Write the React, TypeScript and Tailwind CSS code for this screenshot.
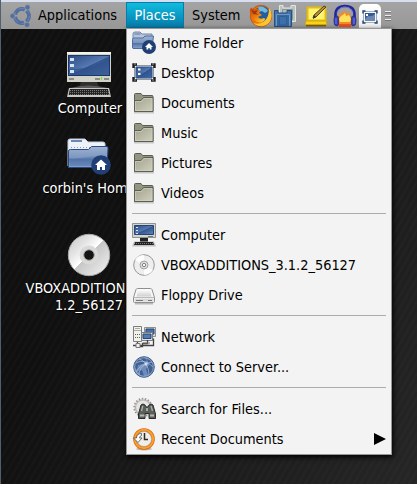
import React from "react";

type IconProps = { className?: string };

const Gradients = () => (
  <svg className="absolute h-0 w-0" aria-hidden="true">
    <defs>
      <linearGradient id="blue" x1="0" y1="0" x2="1" y2="1">
        <stop offset="0" stopColor="#2d4c85" />
        <stop offset=".5" stopColor="#5579b1" />
        <stop offset=".52" stopColor="#34558f" />
        <stop offset="1" stopColor="#6284b6" />
      </linearGradient>
      <linearGradient id="folderBlue" x1="0" y1="0" x2="0" y2="1">
        <stop offset="0" stopColor="#9fb3d1" />
        <stop offset=".55" stopColor="#7b95bf" />
        <stop offset=".6" stopColor="#5474a8" />
        <stop offset="1" stopColor="#89a2c8" />
      </linearGradient>
      <linearGradient id="olive" x1="0" y1="0" x2="1" y2="1">
        <stop offset="0" stopColor="#a1a18d" />
        <stop offset="1" stopColor="#d0d0bc" />
      </linearGradient>
      <linearGradient id="disc" x1="0" y1="0" x2="1" y2="1">
        <stop offset="0" stopColor="#c5c5c5" />
        <stop offset=".3" stopColor="#e4e4e4" />
        <stop offset=".49" stopColor="#ffffff" />
        <stop offset=".5" stopColor="#c6c6c6" />
        <stop offset=".75" stopColor="#dedede" />
        <stop offset="1" stopColor="#f4f4f4" />
      </linearGradient>
      <linearGradient id="fox" x1="0" y1="0" x2="1" y2="1">
        <stop offset="0" stopColor="#cf3c08" />
        <stop offset=".5" stopColor="#ee7d0a" />
        <stop offset="1" stopColor="#ffd83a" />
      </linearGradient>
      <linearGradient id="metal" x1="0" y1="0" x2="0" y2="1">
        <stop offset="0" stopColor="#ffffff" />
        <stop offset="1" stopColor="#cfcfcf" />
      </linearGradient>
      <pattern id="keys" width="2" height="2" patternUnits="userSpaceOnUse">
        <rect width="2" height="2" fill="#242424" />
        <rect width="1" height="1" fill="#777" />
      </pattern>
    </defs>
  </svg>
);

const ComputerArt = () => (
  <>
    <path d="M15 30h16l2 5H13z" fill="#303030" />
    <path d="M4 36q18-5 38 0z" fill="#5b5b5b" />
    <path d="M3 36h40l2 9H1z" fill="#c8c8c3" />
    <path d="M4 37h38l1.500 6h-41z" fill="url(#keys)" />
    <path d="M1 0h44v30H1z" fill="#d2d3c8" />
    <path d="M1 0h44v2H1z" fill="#f3f4e9" />
    <path d="M2 3h42v21H2z" fill="#193767" />
    <path d="M3 4h40v19H3z" fill="url(#blue)" />
    <path d="M3 17Q26 18 43 6v17H3z" fill="#2d508c" opacity=".65" />
    <path d="M4 6h4v3H4zM4 12h4v3H4zM4 18h4v3H4z" fill="#d5e3f3" />
    <path d="M3 26h5v2H3zM29 26h5v2h-5zM38 26h5v2h-5z" fill="#8b8d86" />
    <path d="M35 25h1v3h-1z" fill="#72ea12" />
  </>
);

const Computer = ({ className = "h-[46px] w-[46px]" }: IconProps) => (
  <svg className={className} viewBox="0 0 46 46"><ComputerArt /></svg>
);

const HomeFolder = ({ className = "h-[37px] w-[44px]" }: IconProps) => (
  <svg className={className} viewBox="0 0 44 37">
    <path d="M1 28V3q0-2 2-2h15l3 3h15q2 0 2 2v23z" fill="#eef2f8" stroke="#c5cddb" />
    <path d="M4 2h11v2H4z" fill="#6b88b5" />
    <path d="M4 9.500h32" stroke="#8299bd" strokeDasharray="1 2" />
    <path d="M1.500 29.500V13q0-1.500 2-1.500h18l3-3h15q2 0 1.500 2l-1 17q0 2-2 2z" fill="url(#folderBlue)" stroke="#284b85" />
    <path d="M3 22Q20 18 39 18v10H3z" fill="#4c70a9" opacity=".45" />
    <circle cx="34" cy="27" r="9.800" fill="#203f75" />
    <path d="m34 21.500-6 5.500h2v5h3v-3h2v3h3v-5h2z" fill="white" />
  </svg>
);

const Disc = () => (
  <svg className="h-[44px] w-[44px]" viewBox="0 0 44 44">
    <circle cx="22" cy="22" r="20.700" fill="url(#disc)" stroke="#a9a9a9" />
    <circle cx="22" cy="22" r="9.500" fill="#d9d9d7" />
    <circle cx="22" cy="22" r="5.300" fill="#151515" stroke="#aaa" />
  </svg>
);

const SmallHome = () => (
  <svg className="size-6" viewBox="0 0 24 24">
    <path d="M1 16V3q0-2 2-2h5l2 2h10v13z" fill="#b8c5d9" stroke="#7086aa" />
    <path d="M2.500 3h6" stroke="#5878a8" />
    <path d="M.5 17V8.500Q.5 7 2 7h9l2-2h8.500L20 17.500H1z" fill="url(#folderBlue)" stroke="#4f6e9f" />
    <circle cx="17" cy="16" r="7" fill="#203f75" />
    <path d="m17 12-4 4h1.500v2.500h1.800V17h1.400v1.500h1.800V16H21z" fill="white" />
  </svg>
);

const DesktopIcon = () => (
  <svg className="size-6" viewBox="0 0 24 24">
    <path d="M2.500 4.500h19v14h-19z" fill="#e9edf1" stroke="#9199a2" />
    <path d="M4 6h16v11H4z" fill="url(#blue)" stroke="#315488" />
    <path d="M5 12Q13 13 20 7v9H5z" fill="#2b5290" opacity=".6" />
    <path d="M6 7.500h2.500v2H6zM6 12h2.500v2H6z" fill="#fff" />
    <path d="M1.500 7V3.500H5M19 3.500h3.500V7M1.500 16v3.500H5M19 19.500h3.500V16" fill="none" stroke="#202020" strokeWidth="2.400" />
    <path d="M2 3h2M20 3h2M2 19h2M20 19h2" stroke="#999" />
  </svg>
);

const TrayDesktop = () => (
  <svg className="h-[14px] w-[16px]" viewBox="0 0 16 14">
    <path d="M1.500 1.500h13v11h-13z" fill="#f4f6f8" stroke="#a0aebd" />
    <path d="M3 3h10v8H3z" fill="#365b91" />
    <path d="M6 6q4 1 7-2v7H3V9z" fill="#6b88b3" />
    <path d="M4 4h2v2H4z" fill="#fff" />
    <path d="M1 3.500V1h2.500M12.500 1H15v2.500M1 10.500V13h2.500M12.500 13H15v-2.500" fill="none" stroke="#25456c" strokeWidth="1.400" />
  </svg>
);

const Folder = () => (
  <svg className="size-6" viewBox="0 0 24 24">
    <path d="M2 21.500h20" stroke="#aaa" strokeWidth="2" opacity=".6" />
    <path d="M2.500 20V3.500q0-1 1-1H9l1.500 2h9.500q1 0 1 1V20q0 .5-.5.5H3q-.5 0-.5-.5z" fill="#929580" stroke="#5b5d55" />
    <path d="M2.500 9.500H9l2.500-3h9.500v14H2.500z" fill="url(#olive)" stroke="#5d5f56" />
    <path d="M3.500 19.500v-9h6l2.500-3h8v12z" fill="none" stroke="#d3d5c7" opacity=".6" />
  </svg>
);

const SmallComputer = () => (
  <svg className="size-6" viewBox="0 0 24 24">
    <path d="M.5.5h23v14H.5z" fill="#d4d5cf" stroke="#90938d" />
    <path d="M2.500 2.500h19v9h-19z" fill="url(#blue)" stroke="#244676" />
    <path d="M4 4.500h2M4 7.500h2M4 10.500h2" stroke="#dce7f8" />
    <path d="M8 15h8v4H8z" fill="#232323" />
    <path d="M2 18.500h20l2 5H0z" fill="#c1c1bf" />
    <path d="M3 19h18l1 3H2z" fill="url(#keys)" />
    <path d="M16 13.500h5" stroke="#777" />
  </svg>
);

const SmallDisc = () => (
  <svg className="size-6" viewBox="0 0 24 24">
    <circle cx="12" cy="12" r="10.300" fill="#eeeeee" stroke="#999" />
    <path d="M12 12 3 7Q5 2 12 2zM12 12l9 5q-3 5-9 5z" fill="#fff" opacity=".8" />
    <circle cx="12" cy="12" r="4" fill="#dedede" stroke="#a4a4a4" />
    <circle cx="12" cy="12" r="1.700" fill="#f7f7f7" stroke="#808080" />
  </svg>
);

const Floppy = () => (
  <svg className="size-6" viewBox="0 0 24 24">
    <path d="M3 20.500h18" stroke="#bbb" strokeWidth="2" />
    <path d="M5.500 5.500h13q1 0 1.500 1l2.500 8v4q0 1-1 1h-19q-1 0-1-1v-4l2.500-8q.5-1 1.500-1z" fill="#f7f7f7" stroke="#8f8f8f" />
    <path d="M2.500 15.500h19v3h-19z" fill="#dadada" />
    <path d="m4.500 13.500 2-7h11l2 7z" fill="url(#metal)" />
    <path d="M4 17.500h7M16 17.500h4" stroke="#777" />
    <path d="M2 14.500h20" stroke="#bbb" />
  </svg>
);

const Network = () => (
  <svg className="size-6" viewBox="0 0 24 24">
    <path d="M12.500 2.500h11v9h-11z" fill="#d9dbd7" stroke="#8c8f8c" />
    <path d="M14 4h8v5h-8z" fill="#4a6da2" stroke="#234780" />
    <path d="M1.500 1.500h8v15h-8z" fill="#f2f2ed" stroke="#7b7e78" />
    <path d="M2 5.500h7M3 3.500h5" stroke="#aaa" />
    <path d="M3 9.500h5M3 12.500h5" stroke="#5d5f5d" strokeDasharray="1 1" />
    <path d="M9.500 7.500h11v8h-11z" fill="#e1e3df" stroke="#7a7d79" />
    <path d="M11 9h8v4.500h-8z" fill="#547ab1" stroke="#234780" />
    <path d="M5.500 17v3.500M1 20.500h20.500v-7M15.500 15v3.500h-5v3h-5" fill="none" stroke="#404340" strokeWidth="1.300" />
    <path d="M4 18.500h4v4H4zM11 18h7" fill="#eee" stroke="#777" />
  </svg>
);

const Globe = () => (
  <svg className="size-6" viewBox="0 0 24 24">
    <circle cx="12" cy="12" r="10.300" fill="#6d8bbb" stroke="#42618f" />
    <path d="M3 8q3-5 8-6l4 3-4 4-5 1-1 5q-3-2-2-7zM15 4l4 1 3 7-2 6-4 2-2-6 3-4zM6 16l4-1 2 6-4-1z" fill="#345587" opacity=".8" />
    <path d="M4 8Q12 3 21 12M4 17Q8 9 20 7M14 9q3 5 3 11M7 20q0-7 7-11M14 9Q10 4 7 4" fill="none" stroke="#c8d6eb" strokeWidth=".7" opacity=".8" />
    <circle cx="14" cy="9" r="1.500" fill="#e2eafa" opacity=".75" />
    <circle cx="12" cy="12" r="9.300" fill="none" stroke="#a2b6d5" opacity=".65" />
  </svg>
);

const Search = () => (
  <svg className="size-6" viewBox="0 0 24 24">
    <circle cx="11" cy="10.500" r="8.800" fill="#e5e5e3" stroke="#999493" strokeWidth="1.700" strokeDasharray="1.500 1.570" />
    <circle cx="11" cy="10.500" r="7.500" fill="none" stroke="#b7b1b0" strokeWidth="1.200" />
    <path d="M9 8q2-2 4 0l1 2h2l1-2q2-2 4 0l2.500 9v4.500H17v-5h-4v5H6.500V17z" fill="#5b5f5a" stroke="#292b29" />
    <path d="M8 17.500h4.500v2H8zM18 17.500h4v2h-4z" fill="#b4b6b0" />
    <path d="m9.500 14 1.300-5M19 9l1.500 5" stroke="#aeb1aa" strokeWidth="1.300" />
    <path d="M14 11h2v3h-2z" fill="#a4a8a2" />
  </svg>
);

const Recent = () => (
  <svg className="size-6" viewBox="0 0 24 24">
    <ellipse cx="12" cy="22" rx="8" ry="1.500" fill="#bbb" />
    <circle cx="12" cy="12" r="9.200" fill="#f0eee6" stroke="#ce660d" strokeWidth="3.200" />
    <circle cx="12" cy="12" r="9.200" fill="none" stroke="#ff9d2b" strokeWidth="2" />
    <circle cx="12" cy="12" r="7.500" fill="none" stroke="#aaa" strokeWidth=".7" />
    <path d="M12.500 6v6.500H16" fill="none" stroke="#292b28" strokeWidth="1.500" />
    <path d="M9.500 6.500Q4.500 6.500 4.500 11h-3l4.500 4.500 4-4.500H7.500q0-2 2-2.500z" fill="#fff" stroke="#4d514b" strokeWidth=".8" />
  </svg>
);

const Ubuntu = () => (
  <svg className="size-6" viewBox="0 0 24 24">
    <circle cx="13" cy="12" r="7" fill="none" stroke="#536f9f" strokeWidth="4" strokeDasharray="12.500 2.160" strokeDashoffset="-1" transform="rotate(-58 13 12)" />
    <circle cx="13" cy="12" r="7.500" fill="none" stroke="#8299bd" strokeWidth=".5" strokeDasharray="12 3.700" />
    <g fill="#526f9e" stroke="#9298a2" strokeWidth=".6">
      <circle cx="3.500" cy="12" r="2.500" /><circle cx="18.500" cy="3.300" r="2.500" /><circle cx="18" cy="20.800" r="2.500" />
    </g>
  </svg>
);

const Firefox = () => (
  <svg className="size-6" viewBox="0 0 24 24">
    <circle cx="12" cy="12" r="10.700" fill="#e8720d" stroke="#b84709" strokeWidth=".7" />
    <circle cx="13" cy="10" r="7.800" fill="#255d9d" />
    <path d="M9 3q6-2 10 4l-3 2-3-2-3 1z" fill="#72b7dc" />
    <path d="M2 3.500Q4 6 8 4.500L11 7l-1 2 3 2-4 2q2 3 6 1 2 1 0 3-5 4-11-2Q-1 9 2 3.500z" fill="url(#fox)" />
    <path d="M20 4q3 4 2.500 9-1 7-8 9-6 1-10-3 5 2 10-1 6-5 5.500-14z" fill="#ffc52f" />
    <path d="m2 5 3 2 4-1-2 3 3 2-6-1z" fill="#9f3b13" />
  </svg>
);

const Switcher = () => (
  <svg className="h-6 w-[22px]" viewBox="0 0 22 24">
    <path d="M5.500 1.500H9V4h8V1.500h4.500v16h-16z" fill="#bac3c4" stroke="#e0e5e4" />
    <path d="M8.500 5.500h10v10h-10z" fill="#adb9bc" stroke="#859296" />
    <path d="M.5 6.500H4V9h9V6.500h4.500v16H.5z" fill="#4375ac" stroke="#294f7b" />
    <path d="M2.500 22V10.500h13V22" fill="#3468a1" stroke="#7097c2" />
    <path d="M5.500 12.500h7V21h-7z" fill="#3d70aa" stroke="#2f5f98" />
  </svg>
);

const Notes = () => (
  <svg className="h-[22px] w-6" viewBox="0 0 24 22">
    <path d="M2 20.500h20" stroke="#775c12" strokeWidth="2" />
    <path d="M3.500 2.500h18v13h-18z" fill="#fff46f" stroke="#e4bb11" strokeWidth="2" />
    <path d="M2 16h20l1 3.500H1z" fill="#f8d41a" stroke="#d3a50c" />
    <path d="m20 1 2 1-10 10-3 1 1-3z" fill="#b78c35" stroke="#514629" />
    <path d="m12 12-3 2 1-4" fill="#333" />
  </svg>
);

const Audacity = () => (
  <svg className="size-6" viewBox="0 0 24 24">
    <path d="M2.500 14V11Q2.500 2 12 2t9.500 9v3" fill="none" stroke="#23259b" strokeWidth="2.600" />
    <path d="M4 9Q6 3 12 3t8 6" fill="none" stroke="#7882cf" strokeWidth="1" />
    <path d="m5 14 1-4 2 1 1-4 2 2 2-3 1 4 3-2v4l2 2v6l-1 3H6l-1-3z" fill="#f58a24" />
    <path d="m6 15 2-3 2-1 2-2 1 3 3-1 2 4-1 3H7z" fill="#ffe05b" />
    <path d="M6 20h12v3H6z" fill="#ec4e21" />
    <path d="M1 15q0-3 3-3 1.500 0 1.500 2v6q0 2-1.500 2-3 0-3-4zM23 15q0-3-3-3-1.500 0-1.500 2v6q0 2 1.500 2 3 0 3-4z" fill="#3940b5" stroke="#232886" strokeWidth=".7" />
    <path d="M3 14v6M21 14v6" stroke="#777fd5" />
  </svg>
);

const groups = [
  [[SmallHome, "Home Folder"], [DesktopIcon, "Desktop"], [Folder, "Documents"], [Folder, "Music"], [Folder, "Pictures"], [Folder, "Videos"]],
  [[SmallComputer, "Computer"], [SmallDisc, "VBOXADDITIONS_3.1.2_56127"], [Floppy, "Floppy Drive"]],
  [[Network, "Network"], [Globe, "Connect to Server..."]],
  [[Search, "Search for Files..."], [Recent, "Recent Documents"]],
] as [React.ComponentType, string][][];

function PlacesMenu() {
  return (
    <nav className="absolute left-[125px] top-[28px] w-[266px] border border-[#979797] bg-[#f3f3f3] shadow-[1px_2px_5px_#000]">
      {groups.map((items, index) => (
        <React.Fragment key={index}>
          {index > 0 && <div className="mx-[5px] h-3 pt-[5px]"><div className="h-px bg-[#acacac]" /></div>}
          {items.map(([Icon, label], row) => (
            <div key={label} className={index === 0 && row === 0 ? "flex h-[29px] items-center pb-px pl-[5px] pr-[5px]" : "flex h-[30px] items-center pl-[5px] pr-[5px]"}>
              <Icon />
              <span className="ml-[5px] grow whitespace-nowrap">{label}</span>
              {label === "Recent Documents" && <svg className="h-3 w-3" viewBox="0 0 12 12"><path d="m0 0 12 6-12 6z" /></svg>}
            </div>
          ))}
        </React.Fragment>
      ))}
    </nav>
  );
}

export default function App() {
  return (
    <div className="relative h-[484px] w-[417px] overflow-hidden border-l border-[#506070] bg-[#151515] bg-[repeating-linear-gradient(120deg,#ffffff04_0px,#ffffff04_2px,transparent_3px,transparent_6px),linear-gradient(120deg,#101010_35%,#262626)] font-['DejaVu_Sans_Condensed','DejaVu_Sans',sans-serif] font-stretch-semi-condensed text-[14.4px] leading-[17px] text-black">
      <Gradients />
      <header className="flex h-[29px] items-center border-t-2 border-[#d7def0] bg-linear-to-b from-[#a4a4a4] to-[#979797]">
        <div className="flex w-[125px] items-center pl-2"><Ubuntu /><span className="ml-[5px]">Applications</span></div>
        <div className="flex h-full w-[58px] items-center justify-center border border-[#087ba9] bg-linear-to-b from-[#10bddf] to-[#0878a7] text-white">Places</div>
        <span className="w-[64px] pl-2">System</span>
        <span className="ml-px"><Firefox /></span>
        <span className="ml-px"><Switcher /></span>
        <span className="ml-[8px]"><Notes /></span>
        <span className="ml-[5px]"><Audacity /></span>
        <div className="ml-[2px] mt-[2px] flex h-[25px] w-[22px] items-center justify-center rounded-t-[5px] bg-linear-to-b from-white to-[#eeeeee]"><TrayDesktop /></div>
        <div className="ml-1 h-[10px] w-[6px] bg-[repeating-linear-gradient(to_bottom,#eeeeee_0px,#eeeeee_1px,#777_1px,#777_2px,transparent_2px,transparent_4px)]" />
      </header>
      <main className="flex w-[176px] flex-col items-center text-center text-white [text-shadow:1px_1px_1px_#000]">
        <div className="mt-[23px] flex h-[86px] flex-col items-center"><Computer /><span className="mt-[2px] pl-[2px]">Computer</span></div>
        <div className="flex h-[95px] flex-col items-center"><HomeFolder /><span className="mt-[5px] whitespace-nowrap">corbin's Home</span></div>
        <div className="flex flex-col items-center"><Disc /><span className="mt-[3px] whitespace-nowrap">VBOXADDITIONS_3.<br />1.2_56127</span></div>
      </main>
      <PlacesMenu />
    </div>
  );
}
